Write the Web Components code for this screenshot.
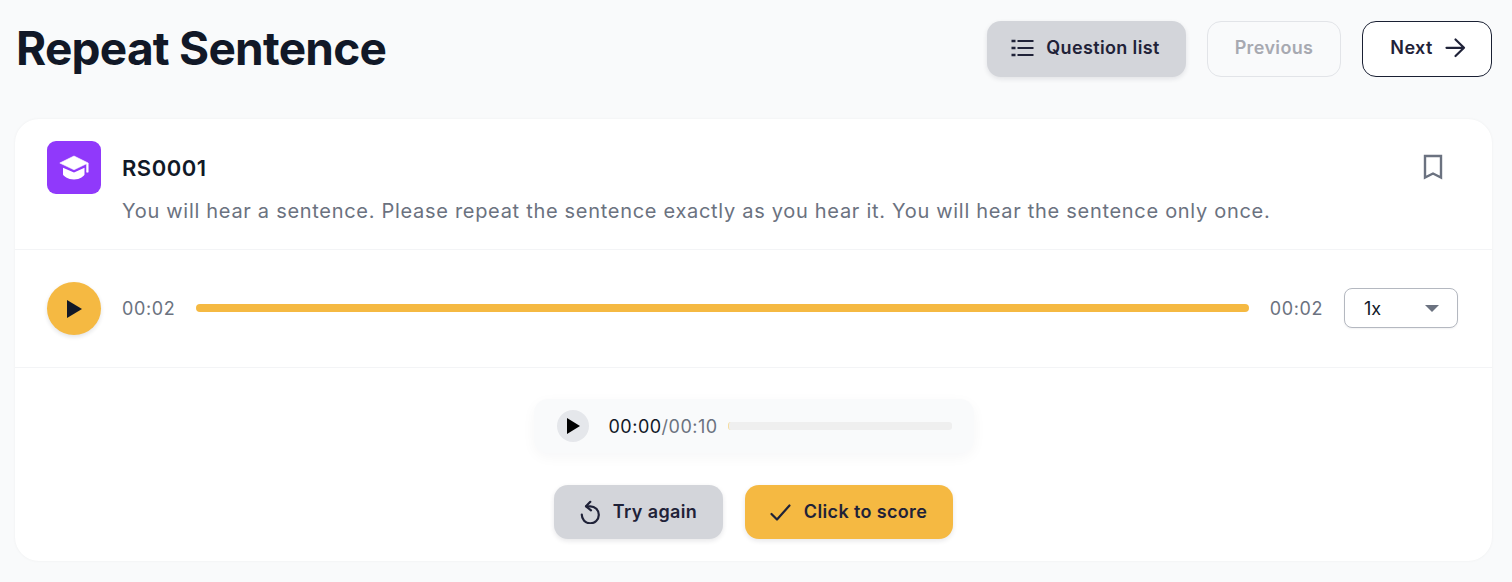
<!DOCTYPE html>
<html lang="en">
<head>
<meta charset="utf-8">
<title>Repeat Sentence</title>
<style>
    html, body {
        margin: 0;
        padding: 0;
        background: #f9fafb;
        font-family: Inter, "Liberation Sans", sans-serif;
        font-optical-sizing: none;
    }
</style>
</head>
<body>

<template id="ui-button-template">
    <style>
        :host {
            display: inline-flex;
            box-sizing: border-box;
            align-items: center;
            justify-content: center;
            gap: 11px;
            height: 54px;
            padding: 0 2px 1px 0;
            border-radius: 14px;
            border: 1px solid transparent;
            font-size: 18px;
            font-weight: 600;
            letter-spacing: 0.36px;
            color: #1f2238;
            white-space: nowrap;
            cursor: pointer;
        }
        :host(.tall) {
            height: 56px;
            padding-bottom: 3px;
        }
        :host(.grey) {
            background: #d3d5da;
            box-shadow: 0 2px 5px rgba(17, 24, 39, 0.1);
        }
        :host(.amber) {
            background: #f5b942;
            box-shadow: 0 2px 5px rgba(17, 24, 39, 0.1);
        }
        :host(.disabled) {
            border-color: #e2e4e8;
            color: #a7a9b1;
            padding-right: 0;
        }
        :host(.outline) {
            border-color: #1a2033;
            background: #fff;
            gap: 10px;
            padding-left: 3px;
            padding-right: 0;
        }
        ::slotted(svg) {
            display: block;
            flex: none;
        }
    </style>
    <slot name="icon"></slot>
    <slot></slot>
    <slot name="action-icon"></slot>
</template>

<template id="page-header-template">
    <style>
        :host {
            display: flex;
            justify-content: space-between;
            align-items: center;
            height: 98px;
            padding: 0 20px 0 16px;
            box-sizing: border-box;
        }
        h1 {
            margin: 0;
            font-size: 46px;
            font-weight: 650;
            letter-spacing: -0.75px;
            color: #111827;
            line-height: 1;
            position: relative;
            top: -1px;
        }
        .actions {
            display: flex;
            gap: 21px;
        }
    </style>
    <h1><slot name="title"></slot></h1>
    <div class="actions"><slot></slot></div>
</template>

<template id="question-card-template">
    <style>
        :host {
            display: block;
            margin: 21px 20px 21px 15px;
            background: #fff;
            border-radius: 24px;
            box-shadow: 0 0 3px rgba(17, 24, 39, 0.05);
        }
    </style>
    <slot></slot>
</template>

<template id="question-head-template">
    <style>
        :host {
            display: grid;
            grid-template-columns: 54px 1fr 24px;
            grid-template-rows: 53px 28px;
            align-content: start;
            column-gap: 21px;
            box-sizing: border-box;
            height: 131px;
            padding: 22px 47px 0 32px;
            border-bottom: 1px solid #f3f4f6;
        }
        .badge {
            width: 54px;
            height: 53px;
            border-radius: 9px;
            background: #9039fb;
            display: flex;
            align-items: center;
            justify-content: center;
        }
        .code {
            font-size: 22px;
            font-weight: 600;
            letter-spacing: 0.5px;
            color: #111827;
            line-height: 54px;
            height: 53px;
        }
        .mark {
            height: 51px;
            display: flex;
            align-items: center;
            justify-content: center;
        }
        .text {
            grid-column: 2 / 4;
            font-size: 20px;
            line-height: 28px;
            color: #6b7280;
            margin-top: 3px;
            margin-right: -30px;
            white-space: nowrap;
            letter-spacing: 0.7px;
        }
    </style>
    <div class="badge"><slot name="icon"></slot></div>
    <div class="code"><slot name="code"></slot></div>
    <div class="mark"><slot name="mark"></slot></div>
    <div class="text"><slot></slot></div>
</template>

<template id="audio-bar-template">
    <style>
        :host {
            display: flex;
            align-items: center;
            box-sizing: border-box;
            height: 118px;
            padding: 0 34px 1px 32px;
            border-bottom: 1px solid #f3f4f6;
        }
        .play {
            width: 54px;
            height: 53px;
            margin-top: 1px;
            border-radius: 50%;
            background: #f5b942;
            box-shadow: 0 2px 4px rgba(17, 24, 39, 0.12);
            display: flex;
            align-items: center;
            justify-content: center;
            flex: none;
        }
        .time {
            font-size: 18px;
            color: #6b7280;
            flex: none;
            letter-spacing: 0.6px;
        }
        .start { margin: 0 21px; }
        .end { margin: 0 21px; }
        .track {
            flex: 1;
            height: 8px;
            border-radius: 4px;
            background: #f5b942;
        }
    </style>
    <div class="play">
        <svg width="16" height="20" viewBox="0 0 16 20"><path d="M1 1v18l15-9z" fill="#111827"/></svg>
    </div>
    <span class="time start"><slot name="current"></slot></span>
    <div class="track"></div>
    <span class="time end"><slot name="total"></slot></span>
    <slot></slot>
</template>

<template id="speed-select-template">
    <style>
        :host {
            display: flex;
            align-items: center;
            justify-content: space-between;
            box-sizing: border-box;
            width: 114px;
            height: 40px;
            padding: 0 19px;
            border: 1px solid #b4b8c0;
            border-radius: 8px;
            font-size: 18px;
            color: #111827;
            background: #fff;
            box-shadow: 0 1px 2px rgba(17, 24, 39, 0.06);
        }
        .caret {
            width: 0;
            height: 0;
            border-left: 7px solid transparent;
            border-right: 7px solid transparent;
            border-top: 7px solid #6b7280;
            margin-right: -1px;
        }
    </style>
    <slot></slot>
    <span class="caret"></span>
</template>

<template id="answer-panel-template">
    <style>
        :host {
            display: flex;
            flex-direction: column;
            align-items: center;
            box-sizing: border-box;
            height: 193px;
            padding-top: 31px;
        }
        .actions {
            display: flex;
            gap: 22px;
            margin-top: 32px;
        }
    </style>
    <slot name="player"></slot>
    <div class="actions"><slot></slot></div>
</template>

<template id="record-player-template">
    <style>
        :host {
            display: flex;
            align-items: center;
            box-sizing: border-box;
            width: 440px;
            height: 54px;
            padding: 0 22px 0 23px;
            border-radius: 14px;
            background: #f9fafb;
            box-shadow: 0 4px 14px rgba(17, 24, 39, 0.04);
            letter-spacing: 0.5px;
        }
        .play {
            width: 32px;
            height: 32px;
            border-radius: 50%;
            background: #e5e7eb;
            display: flex;
            align-items: center;
            justify-content: center;
            flex: none;
            margin-right: 20px;
        }
        .now {
            font-size: 18px;
            color: #111827;
        }
        .sep {
            font-size: 18px;
            color: #6b7280;
        }
        .track {
            flex: 1;
            height: 8px;
            margin-left: 10px;
            border-radius: 3px;
            background: #efefef;
            border-left: 1px solid #f5dca0;
        }
    </style>
    <div class="play">
        <svg width="14" height="16" viewBox="0 0 14 16"><path d="M1 0v16l13-8z" fill="#000"/></svg>
    </div>
    <span class="now"><slot name="now"></slot></span><span class="sep">/<slot name="total"></slot></span>
    <div class="track"></div>
</template>

<page-header>
    <span slot="title">Repeat Sentence</span>
    <ui-button class="grey tall" style="width:199px">
        <svg slot="icon" width="24" height="24" viewBox="0 0 24 24" fill="none" stroke="#1f2238" stroke-width="2" stroke-linecap="butt"><path d="M6.5 5h16M6.5 12h16M6.5 19h16"/><path d="M.5 5h4M.5 12h4M.5 19h4" stroke-width="2.6" stroke-dasharray="4 9"/></svg>
        Question list
    </ui-button>
    <ui-button class="disabled tall" style="width:134px">Previous</ui-button>
    <ui-button class="outline tall" style="width:130px">
        Next
        <svg slot="action-icon" width="24" height="24" viewBox="0 0 24 24" fill="none" stroke="#1f2238" stroke-width="2.2" stroke-linecap="round" stroke-linejoin="round"><path d="M3.5 11.8h17M12.5 3.5l8.5 8.3-8.5 8.2"/></svg>
    </ui-button>
</page-header>

<question-card>
    <question-head>
        <svg slot="icon" width="30" height="30" viewBox="0 0 30 30"><path d="M15 3 .8 10 15 16.8l12.6-6.1v8.5h1.6V10z" fill="#fff" stroke="#fff" stroke-width=".6" stroke-linejoin="round"/><path d="M4 14.8v6.7c0 1.2 5 5 11 5s10.5-3.8 10.5-5v-6.7L15 19.6z" fill="#fff"/></svg>
        <span slot="code">RS0001</span>
        <svg slot="mark" width="24" height="26" viewBox="0 0 24 26" fill="none" stroke="#6b7280" stroke-width="2.4" stroke-linejoin="miter"><path d="M4 2h16v21.5l-8-4-8 4z"/></svg>
        You will hear a sentence. Please repeat the sentence exactly as you hear it. You will hear the sentence only once.
    </question-head>
    <audio-bar>
        <span slot="current">00:02</span>
        <span slot="total">00:02</span>
        <speed-select>1x</speed-select>
    </audio-bar>
    <answer-panel>
        <record-player slot="player">
            <span slot="now">00:00</span>
            <span slot="total">00:10</span>
        </record-player>
        <ui-button class="grey" style="width:169px">
            <svg slot="icon" width="24" height="24" viewBox="0 0 24 24" fill="none" stroke="#1f2238" stroke-width="2.2" stroke-linecap="round" stroke-linejoin="round"><path d="M8.2 6.3h4.1a8.5 8.5 0 1 1-8.5 8.2"/><path d="M12.3 1.8 8 6.3l5 4"/></svg>
            Try again
        </ui-button>
        <ui-button class="amber" style="width:208px">
            <svg slot="icon" width="24" height="24" viewBox="0 0 24 24" fill="none" stroke="#1f2238" stroke-width="2.2" stroke-linecap="round" stroke-linejoin="round"><path d="M2.5 14 8 19.5 20.5 5.5"/></svg>
            Click to score
        </ui-button>
    </answer-panel>
</question-card>

<script type="module">
    const define_from_template = (name, template_id) => {
        customElements.define(
            name,
            class extends HTMLElement {
                constructor() {
                    super();
                    const template_clone = document.getElementById(template_id).content.cloneNode(true);
                    this.attachShadow({ mode: "open" }).append(template_clone);
                }
            },
        );
    };

    define_from_template("ui-button", "ui-button-template");
    define_from_template("page-header", "page-header-template");
    define_from_template("question-card", "question-card-template");
    define_from_template("question-head", "question-head-template");
    define_from_template("audio-bar", "audio-bar-template");
    define_from_template("speed-select", "speed-select-template");
    define_from_template("answer-panel", "answer-panel-template");
    define_from_template("record-player", "record-player-template");
</script>
</body>
</html>
